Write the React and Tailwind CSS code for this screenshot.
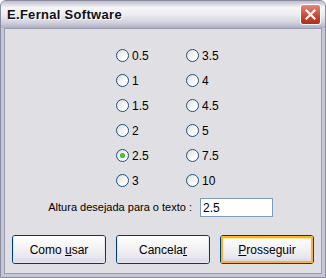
import React, { useState } from 'react';

const values = [
  ['0.5', '3.5'],
  ['1', '4'],
  ['1.5', '4.5'],
  ['2', '5'],
  ['2.5', '7.5'],
  ['3', '10'],
];

const Radio = ({ label, checked, onClick }) => (
  <div className="flex items-center h-[25px] cursor-default" onClick={onClick}>
    <span className="relative w-[13px] h-[13px] rounded-full border border-[#1c5180] bg-[linear-gradient(135deg,#dcdcd6,#ffffff_70%)] flex items-center justify-center">
      {checked && <span className="w-[5px] h-[5px] rounded-full bg-[radial-gradient(circle,#55d451,#21a121)]" />}
    </span>
    <span className="ml-[3px] text-black">{label}</span>
  </div>
);

const XpButton = ({ children, primary }) => (
  <button className="w-[94px] h-[29px] rounded-[3px] border border-[#003c74] bg-[linear-gradient(180deg,#ffffff_0%,#f4f4f4_40%,#e6e6ef_80%,#d6d0e2_100%)] p-0 text-[12px] text-black">
    <span className={"flex items-center justify-center w-full h-full rounded-[2px] " + (primary ? "shadow-[inset_0_0_0_2px_#f8b330,inset_0_1px_0_2px_#fce48e]" : "shadow-[inset_0_-1px_0_1px_#e4e4ee]")}>
      <span className="whitespace-pre">{children}</span>
    </span>
  </button>
);

export default function App() {
  const [sel, setSel] = useState('2.5');
  return (
    <div className="w-[326px] h-[278px] bg-white" style={{ fontFamily: '"Liberation Sans", Arial, sans-serif' }}>
      <div className="w-full h-full flex flex-col rounded-t-[6px] overflow-hidden border border-[#8a8aa0] bg-[#c6c6d6]">
        <div className="h-[27px] shrink-0 flex items-center justify-between pl-[6px] pr-[4px] bg-[linear-gradient(180deg,#bcbccc_0%,#f6f6f8_25%,#ececf2_50%,#d2d2de_80%,#aeaec2_100%)]">
          <span className="text-[13px] font-bold text-[#101018] tracking-[0.3px] [text-shadow:1px_1px_0_#ffffff]">E.Fernal Software</span>
          <div className="w-[21px] h-[21px] rounded-[3px] border border-white bg-[linear-gradient(180deg,#e4887a,#c64535_60%,#b03020)] flex items-center justify-center">
            <svg width="11" height="11" viewBox="0 0 11 11">
              <path d="M1.5 1.5 L9.5 9.5 M9.5 1.5 L1.5 9.5" stroke="#ffffff" strokeWidth="2.2" strokeLinecap="square" />
            </svg>
          </div>
        </div>
        <div className="flex-1 mx-[3px] mb-[3px] border border-[#9c9cb0] bg-[#e0dfe3] flex flex-col text-[12px]">
          <div className="pt-[14px] pl-[111px] grid grid-cols-[70px_70px]">
            {values.map(([a, b]) => (
              <React.Fragment key={a}>
                <Radio label={a} checked={sel === a} onClick={() => setSel(a)} />
                <Radio label={b} checked={sel === b} onClick={() => setSel(b)} />
              </React.Fragment>
            ))}
          </div>
          <div className="mt-[5px] flex items-center justify-end pr-[48px] gap-[8px]">
            <span className="text-black text-[11px]">Altura desejada para o texto :</span>
            <div className="w-[73px] h-[19px] border border-[#7f9db9] bg-white flex items-center pl-[2px] text-black">{sel}</div>
          </div>
          <div className="mt-[18px] pl-[7px] flex gap-[10px]">
            <XpButton>Como <u>u</u>sar</XpButton>
            <XpButton>Cancela<u>r</u></XpButton>
            <XpButton primary><u>P</u>rosseguir</XpButton>
          </div>
        </div>
      </div>
    </div>
  );
}
